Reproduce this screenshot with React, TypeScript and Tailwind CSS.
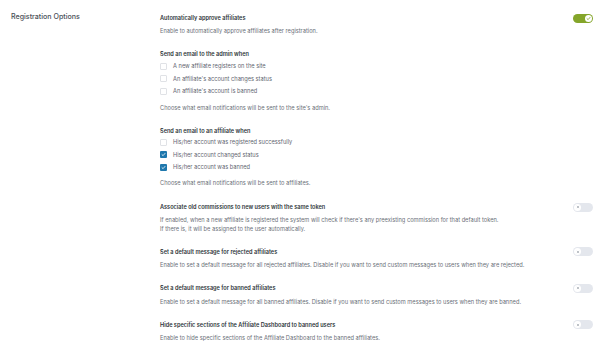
import React from "react";

const font = { fontFamily: "Inter, 'Noto Sans', sans-serif" };

function Toggle({ on }: { on?: boolean }) {
  if (on) {
    return (
      <div className="w-[20px] h-[9px] rounded-full bg-[#84a52a] flex items-center justify-end pr-[1px] shrink-0">
        <div className="w-[7px] h-[7px] rounded-full bg-white flex items-center justify-center">
          <svg width="5" height="5" viewBox="0 0 10 10">
            <path d="M2 5.3 L4.2 7.3 L8 2.8" fill="none" stroke="#84a52a" strokeWidth="1.6" strokeLinecap="round" strokeLinejoin="round" />
          </svg>
        </div>
      </div>
    );
  }
  return (
    <div className="w-[20px] h-[9px] rounded-full bg-[#e4e7ed] flex items-center justify-start pl-[1px] shrink-0">
      <div className="w-[7px] h-[7px] rounded-full bg-white flex items-center justify-center">
        <svg width="4" height="4" viewBox="0 0 10 10">
          <path d="M3 3 L7 7 M7 3 L3 7" fill="none" stroke="#9aa0a8" strokeWidth="1.6" strokeLinecap="round" />
        </svg>
      </div>
    </div>
  );
}

function Check({ checked, label }: { checked?: boolean; label: string }) {
  return (
    <div className="flex items-center h-[8px] gap-[6px]">
      {checked ? (
        <div className="w-[7px] h-[7px] rounded-[1px] bg-[#1f78ad] flex items-center justify-center shrink-0">
          <svg width="5" height="5" viewBox="0 0 10 10">
            <path d="M2 5.3 L4.2 7.3 L8 2.8" fill="none" stroke="white" strokeWidth="1.6" strokeLinecap="round" strokeLinejoin="round" />
          </svg>
        </div>
      ) : (
        <div className="w-[7px] h-[7px] rounded-[1px] border border-[#e0e2e6] bg-white shrink-0" />
      )}
      <span className="text-[5.7px] leading-[8px] text-[#5f6670]">{label}</span>
    </div>
  );
}

function Heading({ children }: { children: React.ReactNode }) {
  return <div className="text-[5.6px] leading-[8px] font-semibold text-[#2c3338]">{children}</div>;
}

function Desc({ children, className = "" }: { children: React.ReactNode; className?: string }) {
  return <div className={"text-[5.7px] leading-[8.4px] text-[#6b7078] " + className}>{children}</div>;
}

function ToggleSection({ title, desc, on, className = "" }: { title: string; desc: React.ReactNode; on?: boolean; className?: string }) {
  return (
    <div className={"flex items-start justify-between " + className}>
      <div className="flex flex-col">
        <Heading>{title}</Heading>
        <Desc className="mt-[5.3px]">{desc}</Desc>
      </div>
      <div className="h-[8px] flex items-center">
        <Toggle on={on} />
      </div>
    </div>
  );
}

export default function App() {
  return (
    <div className="w-[607px] h-[355px] bg-white flex overflow-hidden" style={font}>
      <div className="w-[160px] shrink-0 pl-[11px] pt-[13px]">
        <div className="text-[7.1px] leading-[8px] font-medium text-[#4a5058]">Registration Options</div>
      </div>
      <div className="flex-1 pr-[14px] pt-[14px] flex flex-col">
        <ToggleSection
          title="Automatically approve affiliates"
          desc="Enable to automatically approve affiliates after registration."
          on
        />
        <div className="mt-[14px] flex flex-col">
          <Heading>Send an email to the admin when</Heading>
          <div className="mt-[4.3px] flex flex-col gap-[4.6px]">
            <Check label="A new affiliate registers on the site" />
            <Check label="An affiliate's account changes status" />
            <Check label="An affiliate's account is banned" />
          </div>
          <Desc className="mt-[8.5px]">Choose what email notifications will be sent to the site's admin.</Desc>
        </div>
        <div className="mt-[14.5px] flex flex-col">
          <Heading>Send an email to an affiliate when</Heading>
          <div className="mt-[3.5px] flex flex-col gap-[4.6px]">
            <Check label="His/her account was registered successfully" />
            <Check label="His/her account changed status" checked />
            <Check label="His/her account was banned" checked />
          </div>
          <Desc className="mt-[7.5px]">Choose what email notifications will be sent to affiliates.</Desc>
        </div>
        <ToggleSection
          className="mt-[16px]"
          title="Associate old commissions to new users with the same token"
          desc={
            <>
              If enabled, when a new affiliate is registered the system will check if there's any preexisting commission for that default token.
              <br />
              If there is, it will be assigned to the user automatically.
            </>
          }
        />
        <ToggleSection
          className="mt-[14.6px]"
          title="Set a default message for rejected affiliates"
          desc="Enable to set a default message for all rejected affiliates. Disable if you want to send custom messages to users when they are rejected."
        />
        <ToggleSection
          className="mt-[14.8px]"
          title="Set a default message for banned affiliates"
          desc="Enable to set a default message for all banned affiliates. Disable if you want to send custom messages to users when they are banned."
        />
        <ToggleSection
          className="mt-[14.8px]"
          title="Hide specific sections of the Affiliate Dashboard to banned users"
          desc="Enable to hide specific sections of the Affiliate Dashboard to the banned affiliates."
        />
      </div>
    </div>
  );
}
